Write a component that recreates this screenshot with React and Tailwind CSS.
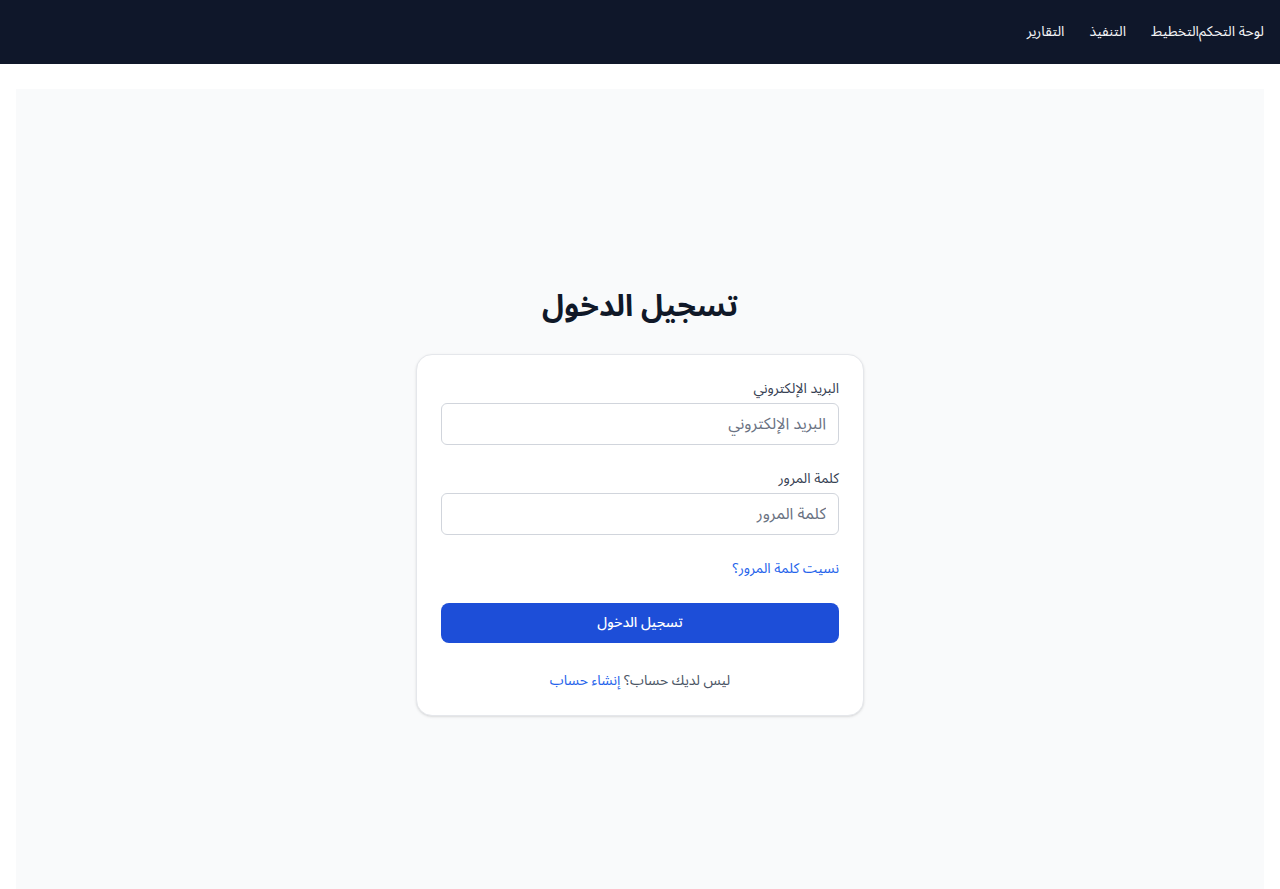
export default function App() {
  return (
    <div dir="rtl" className="min-h-screen bg-white font-['Noto_Sans_Arabic','DejaVu_Sans',sans-serif]">
      <header className="h-16 bg-[#0f172a] px-4 flex items-center">
        <nav className="flex items-center gap-[25px] text-sm text-gray-100">
          <div className="flex">
            <a href="#">لوحة التحكم</a>
            <a href="#">التخطيط</a>
          </div>
          <a href="#">التنفيذ</a>
          <a href="#">التقارير</a>
        </nav>
      </header>
      <div className="px-4 pt-[25px]">
        <main className="bg-gray-50 min-h-[800px] pt-[200px] pb-24 flex flex-col items-center">
          <h1 className="text-3xl font-bold text-gray-900 mb-[29px]">تسجيل الدخول</h1>
          <div className="w-[448px] bg-white border border-gray-200 rounded-2xl shadow-sm p-6">
            <form className="flex flex-col">
              <label className="text-sm text-gray-700 mb-1">البريد الإلكتروني</label>
              <input
                type="email"
                placeholder="البريد الإلكتروني"
                className="h-[42px] rounded-md border border-gray-300 px-3 text-base placeholder:text-gray-500 outline-none"
              />
              <label className="text-sm text-gray-700 mb-1 mt-6">كلمة المرور</label>
              <input
                type="password"
                placeholder="كلمة المرور"
                className="h-[42px] rounded-md border border-gray-300 px-3 text-base placeholder:text-gray-500 outline-none"
              />
              <a href="#" className="mt-6 text-sm text-[#2563eb]">نسيت كلمة المرور؟</a>
              <button type="button" className="mt-6 h-10 rounded-lg bg-[#1d4ed8] text-white text-sm font-medium">
                تسجيل الدخول
              </button>
              <p className="mt-7 text-center text-sm text-gray-600">
                ليس لديك حساب؟ <a href="#" className="text-[#2563eb]">إنشاء حساب</a>
              </p>
            </form>
          </div>
        </main>
      </div>
    </div>
  );
}
